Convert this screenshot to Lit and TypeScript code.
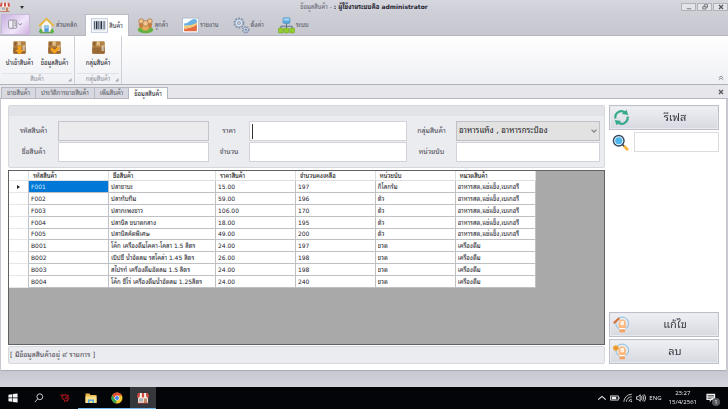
import { LitElement, html, css, svg, nothing } from "lit";
import { customElement, state } from "lit/decorators.js";
import { classMap } from "lit/directives/class-map.js";

const shop = svg`
  <path fill="#f3e6dc" d="M2 9h20v13H2z"/><path fill="#c08a6a" d="M14 13h6v9h-6z"/><path fill="#8fc3e2" stroke="#c08a6a" d="M4.500 13.500h7v5h-7z"/>
  <g fill="#fbf4ef"><path d="M5 2h5v7a2.500 2.500 0 0 1-5 0zM14 2h5v7a2.500 2.500 0 0 1-5 0z"/></g>
  <g fill="#d24a3e"><path d="M2 2h4L5 9a2.300 2.300 0 0 1-5 0zM9.700 2h4.600v7a2.300 2.300 0 0 1-4.600 0zM18 2h4l2 7a2.300 2.300 0 0 1-5 0z"/></g>
  <path fill="#b9463a" d="M1 21.500h22V23H1z"/>`;
const boxBase = svg`
  <rect x="2" y="2" width="20" height="20" rx="2" fill="#b38143"/><path fill="#9a6a36" d="M2 12h20v8a2 2 0 0 1-2 2H4a2 2 0 0 1-2-2z"/>
  <path fill="#e3c38d" d="M9 2h5v8l-2.500-2L9 10z"/><path fill="#f4ead5" d="M17 9h4v8h-4z"/><path stroke="#8c6a44" d="M18 10v6M20 10v6" stroke-width=".8"/>
  <path stroke="#6e4a28" fill="none" d="M4 5h4M4 8h3M5 3v6"/>`;

const icons = {
  shop,
  house: svg`<path fill="#58a846" d="M1 20q11-5 22 0l-2 3H3z"/><path fill="#f7f4ea" stroke="#a59c87" stroke-width=".7" d="M4.500 11 12 4l7.500 7v10h-15z"/>
    <path fill="none" stroke="#e8b72f" stroke-width="2.400" stroke-linejoin="round" d="M1.500 13 12 2.500 22.500 13"/><path fill="#4e9bd8" d="M9 12h6v9H9z"/><path fill="#a6d4f4" d="M10 13h4v3h-4z"/><path fill="#58b43c" d="M2 17q3-2 5 3l-4 2zM17 20q2-5 5-3l-1 5z"/>`,
  barcode: svg`<rect x=".5" y="2.500" width="23" height="19" fill="#fff" stroke="#9fb4cd"/><rect x="3" y="5" width="18" height="14" fill="#cad3de"/>
    <path stroke="#26303d" d="M5 6v11M11 6v11M18.500 6v11"/><path stroke="#26303d" stroke-width="2" d="M8 6v11M14.500 6v11"/>`,
  people: svg`<ellipse cx="12" cy="18" rx="11" ry="5" fill="#62b13e"/><path fill="#8ccf5e" d="M4 16q8-4 16 0-8 4-16 0"/>
    <path fill="#c77f3d" d="M2.500 10q3-3 6 0v6H4zM15.500 10q3-3 6 0L20 16h-4.500z"/>
    <g fill="#f2c490" stroke="#9b6334" stroke-width=".9"><circle cx="6" cy="6" r="3.500"/><circle cx="18" cy="6" r="3.500"/></g>
    <path fill="#e7a85b" d="M7.500 14q4.500-4 9 0l-1 5h-7z"/><circle cx="12" cy="9" r="4" fill="#f2c490" stroke="#9b6334" stroke-width=".9"/>`,
  chart: svg`<rect x=".5" y="1.500" width="23" height="21" fill="#fff" stroke="#a3b2cb"/><path fill="#e46b44" d="M3 19v-3q9 1 18-6v10H3z"/><path fill="#f5cb72" d="M3 16v-4q9 1 18-5v4q-9 6-18 5"/><path fill="#6cb1e3" d="M3 12V9q5 0 9-4t9-1v4q-9 5-18 4"/>`,
  gears: svg`<g fill="#dde5f0" stroke="#8392aa"><circle cx="8.500" cy="8.500" r="6.500" stroke-width="2.500" stroke-dasharray="2.600 1.500"/><circle cx="8.500" cy="8.500" r="5.500"/><circle cx="8.500" cy="8.500" r="2.200" fill="#c8c8d0"/>
    <circle cx="18" cy="18" r="4" stroke-width="2.500" stroke-dasharray="2 1.300"/><circle cx="18" cy="18" r="3.500"/><circle cx="18" cy="18" r="1.300" fill="#5e85b8"/></g>`,
  network: svg`<rect x="7" y="1" width="10" height="8" rx="1.500" fill="#58a9e0" stroke="#3c7bb0" stroke-width=".6"/><path fill="#aad6f5" d="M8 2h8v3H8z"/>
    <path fill="none" stroke="#5c7391" stroke-width="1.400" d="M12 9v7M4 16v-3h16v3"/>
    <g fill="#93cc2f" stroke="#5f941f" stroke-width=".6"><rect x=".5" y="15.500" width="7" height="7" rx="1.500"/><rect x="8.500" y="15.500" width="7" height="7" rx="1.500"/><rect x="16.500" y="15.500" width="7" height="7" rx="1.500"/></g>`,
  boxDown: svg`${boxBase}<path fill="#f8a51c" d="M9 10h6v6h3.500L12 23l-6.500-7H9z"/>`,
  boxCheck: svg`${boxBase}<path fill="#f8a51c" d="m5 15 3-3 4 4 6-6 3 3-9 9z"/>`,
  box: boxBase,
  launcher: svg`<rect x="1" y="5" width="13" height="13" rx="1.500" fill="#f4f1f8" stroke="#8c8694" stroke-width="1.400"/><path stroke="#8c8694" stroke-width="1.500" d="M8 5v13M10 8h3M10 11h3M10 14h3"/><path fill="none" stroke="#8c8694" stroke-width="1.600" d="m17 10 2.500 3 2.500-3"/>`,
  corner: svg`<path fill="#a3a4ae" d="M22 8v14H8z"/>`,
  refresh: svg`<g fill="none" stroke="#35a98c" stroke-width="3"><path d="M3.500 13.500A8.500 8.500 0 0 1 17 5"/><path d="M20.500 10.500A8.500 8.500 0 0 1 7 19"/></g><path fill="#35a98c" d="m12.500 7 9 1.500L19 1zM11.500 17l-9-1.500L5 23z"/>`,
  search: svg`<path stroke="#f6b53c" stroke-width="4" stroke-linecap="round" d="m17.500 17.500 4 4"/><path stroke="#2c3e50" stroke-width="2" d="m14 14 3 3"/><circle cx="9.500" cy="9.500" r="7.500" fill="#e8f5fc" stroke="#34495e" stroke-width="2"/><circle cx="9.500" cy="9.500" r="5" fill="#4db6ec"/>`,
  editHand: svg`<circle cx="13" cy="10.500" r="9" fill="none" stroke="#83bce2" stroke-width="1.400"/><path fill="#fbb77c" d="M8 11q0-6 5-6t5 6v7H8z"/><path fill="#fff0df" d="M10.500 7h5v6h-5z"/><path fill="#fff" d="M8.500 17h9v2h-9z"/><path fill="#f7a35f" d="M9 19h8v4H9z"/><path stroke="#d2763e" stroke-width="3" d="m1 10 8-7"/>`,
  deleteHand: svg`<circle cx="13" cy="10.500" r="9" fill="none" stroke="#83bce2" stroke-width="1.400"/><path fill="#fbb77c" d="M8 11q0-6 5-6t5 6v7H8z"/><path fill="#fff0df" d="M10.500 7h5v6h-5z"/><path fill="#fff" d="M8.500 17h9v2h-9z"/><path fill="#f7a35f" d="M9 19h8v4H9z"/><circle cx="4" cy="7" r="4" fill="#f0a63a"/><path stroke="#b96b16" d="M2 7h4"/>`,
  minimize: svg`<path stroke="#55555f" stroke-width="3" d="M3 19h18"/>`,
  restore: svg`<g fill="#eee" stroke="#55555f" stroke-width="3"><path d="M9 3h13v10H9z"/><path d="M3 11h13v9H3z"/></g>`,
  close: svg`<path stroke="#55555f" stroke-width="5" d="m4 4 16 16M20 4 4 20"/>`,
  collapse: svg`<path fill="none" stroke="#77777f" stroke-width="3" d="m3 12 9-8 9 8M3 20l9-8 9 8"/>`,
  windows: svg`<path fill="#f4f4f4" d="m1 4 9-1.200V11H1zM11.500 2.500 23 1v10H11.500zM1 12.500h9v8.300L1 19.500zM11.500 12.500H23V23l-11.500-1.600z"/>`,
  taskSearch: svg`<circle cx="14" cy="9" r="7" fill="none" stroke="#e8e8e8" stroke-width="2"/><path stroke="#e8e8e8" stroke-width="2" d="m9 14-7 8"/>`,
  garena: svg`<path fill="none" stroke="#b3161c" stroke-width="2.600" d="M1 6q10-4 20 1M8 6q-6 5-1 8t4 7M13 10q7-3 7 3t-7 7M12 13h5"/>`,
  folder: svg`<path fill="#e9b94c" d="M1 3h8l2 3h12v16H1z"/><path fill="#fbe08c" d="M1 9h22v13H1z"/><path fill="#56a8da" d="M6 15h12v7h-3v-4H9v4H6z"/>`,
  chrome: svg`<circle cx="12" cy="12" r="11" fill="#f4c430"/><path fill="#dd4a3a" d="M2.500 6.500A11 11 0 0 1 22 7H12l-5 5z"/><path fill="#31a350" d="M2.500 6.500 8 15l4 2-3 5.700A11 11 0 0 1 2.500 6.500"/><circle cx="12" cy="12" r="5" fill="#fff"/><circle cx="12" cy="12" r="4" fill="#4285f4"/>`,
  up: svg`<path fill="none" stroke="#eee" stroke-width="2.500" d="m3 16 9-8 9 8"/>`,
  battery: svg`<path fill="none" stroke="#eee" stroke-width="2" d="M1 7h19v10H1z"/><path fill="#eee" d="M4 9h11v6H4zM21 10h2v4h-2z"/>`,
  wifi: svg`<g fill="none" stroke="#ddd" stroke-width="2"><path d="M2 21A19 19 0 0 1 21 3M8 21A13 13 0 0 1 21 9M14 21a7 7 0 0 1 7-6"/></g><circle cx="20" cy="20" r="2" fill="#ddd"/>`,
  sound: svg`<path fill="none" stroke="#eee" stroke-width="2" d="M1 9h4l5-5v16l-5-5H1zM13 8q3 4 0 8M16 5q6 7 0 14M19 3q8 9 0 18"/>`,
  note: svg`<path fill="#f2f2f2" d="M1 2h21v15h-9l-4 5v-5H1z"/><path stroke="#222" stroke-width="1.500" d="M4 6h15M4 9.500h15M4 13h9"/>`,
};
type IconName = keyof typeof icons;

const icon = (name: IconName, size = "") =>
  html`<svg class="icon ${size}" viewBox="0 0 24 24" aria-hidden="true">${icons[name]}</svg>`;

interface Product { code: string; name: string; price: string; left: string; unit: string; group: string }

const FRESH = "อาหารสด,แช่แข็ง,เบเกอรี";
const DRINK = "เครื่องดื่ม";
const PRODUCTS: Product[] = [
  { code: "F001", name: "ปลาซาบะ", price: "15.00", left: "197", unit: "กิโลกรัม", group: FRESH },
  { code: "F002", name: "ปลาทับทิม", price: "59.00", left: "196", unit: "ตัว", group: FRESH },
  { code: "F003", name: "ปลากะพงขาว", price: "106.00", left: "170", unit: "ตัว", group: FRESH },
  { code: "F004", name: "ปลานิล ขนาดกลาง", price: "18.00", left: "195", unit: "ตัว", group: FRESH },
  { code: "F005", name: "ปลานิลคัดพิเศษ", price: "49.00", left: "200", unit: "ตัว", group: FRESH },
  { code: "B001", name: "โค้ก เครื่องดื่มโคคา-โคลา 1.5 ลิตร", price: "24.00", left: "197", unit: "ขวด", group: DRINK },
  { code: "B002", name: "เป๊ปซี่ น้ำอัดลม รสโคล่า 1.45 ลิตร", price: "26.00", left: "198", unit: "ขวด", group: DRINK },
  { code: "B003", name: "สไปรท์ เครื่องดื่มอัดลม 1.5 ลิตร", price: "24.00", left: "198", unit: "ขวด", group: DRINK },
  { code: "B004", name: "โค้ก ซีโร่ เครื่องดื่มน้ำอัดลม 1.25ลิตร", price: "24.00", left: "240", unit: "ขวด", group: DRINK },
];

const MENU: { icon: IconName; label: string }[] = [
  { icon: "house", label: "ส่วนหลัก" },
  { icon: "barcode", label: "สินค้า" },
  { icon: "people", label: "ลูกค้า" },
  { icon: "chart", label: "รายงาน" },
  { icon: "gears", label: "ตั้งค่า" },
  { icon: "network", label: "ระบบ" },
];

@customElement("app-root")
export class AppRoot extends LitElement {
  @state() private menu = "สินค้า";
  @state() private page = "ข้อมูลสินค้า";
  @state() private selected = "F001";

  static styles = css`
    :host {
      display: flex; flex-direction: column; min-height: 100vh;
      font: 6px/10px "DejaVu Sans", "Noto Sans Thai Looped", "Loma", "Noto Sans Thai", sans-serif;
      color: #24242c; background: #c8c8d0;
    }
    * { box-sizing: border-box; }
    button, input, select { font: inherit; color: inherit; margin: 0; padding: 0; border: 0; background: none; border-radius: 0; }
    .icon { width: 15px; height: 15px; flex: none; display: block; }
    .icon.xs { width: 6px; height: 6px; }
    .icon.s { width: 10px; height: 10px; }
    .icon.m { width: 12px; height: 12px; }
    .icon.l { width: 17px; height: 17px; }

    .titlebar { display: grid; grid-template-columns: 1fr auto 1fr; align-items: center; height: 14px; background: linear-gradient(#d6d7de, #cdced6); }
    .quick { display: flex; align-items: center; gap: 10px; }
    .caret { border: 2px solid transparent; border-top: 3px solid #333; border-bottom: 0; }
    .title { color: #666672; }
    .title b { color: #23232f; }
    .winbtns { display: flex; justify-content: flex-end; gap: 1px; }
    .winbtns button { width: 15px; height: 8px; border: 1px solid #b1b1ba; background: #e3e3e9; display: grid; place-items: center; }

    .menu { display: flex; height: 22px; background: linear-gradient(#cdced6, #c6c7cf); border-bottom: 1px solid #b4b5bf; }
    .launcher { width: 29px; margin: 0 2px 0 1px; display: grid; place-items: center; background: linear-gradient(135deg, #c9afe0, #f0e6fa 60%, #cfaee0); border: 1px solid #c9b9d8; }
    .tab { display: flex; align-items: center; gap: 1px; padding: 0 5px; margin-right: 2px; color: #55555f; border: 1px solid transparent; border-bottom: 0; white-space: nowrap; }
    .tab.on { background: #fff; border-color: #b9bac4; color: #33333c; margin-bottom: -1px; }

    .ribbon { display: flex; height: 49px; background: linear-gradient(#fff, #eff0f4); border-bottom: 1px solid #b0b1bb; }
    .group { display: flex; flex-direction: column; justify-content: space-between; border-right: 1px solid #cfd0d8; padding: 4px 2px 0; }
    .tools { display: flex; }
    .tool { display: flex; flex-direction: column; align-items: center; gap: 3px; width: 35px; white-space: nowrap; }
    .group.single .tool { width: 42px; }
    .caption { display: grid; grid-template-columns: 6px 1fr 6px; align-items: center; text-align: center; color: #92939d; border-top: 1px solid #e2e3e9; }
    .caption span { grid-column: 2; }
    .collapse { margin: auto 4px 3px auto; }

    .docs { display: flex; align-items: flex-end; height: 14px; padding: 0 4px 0 2px; background: #e6e6eb; border-bottom: 1px solid #b6b7c1; }
    .doc { height: 11px; padding: 0 5px; color: #5b5b66; border: 1px solid #b6b7c1; border-bottom: 0; margin-left: -1px; background: #d8d9e0; white-space: nowrap; }
    .doc.on { height: 12px; background: #fff; color: #22222b; margin-bottom: -1px; }
    .docs .end { margin: auto 0 auto auto; }

    main { flex: 1; display: flex; gap: 4px; margin: 0 2px 0 1px; padding: 6px 7px; background: #fff; border-bottom: 1px solid #a9aab5; }
    .left { flex: 1; min-width: 0; display: flex; flex-direction: column; gap: 1px; }
    .panel { background: #ebecf0; border: 1px solid #d6d7dd; border-radius: 2px; }
    .strip { height: 10px; background: #e2e3e8; }
    .form { display: grid; grid-template-columns: 49px 151fr 40px 158fr 49px 144fr; grid-auto-rows: 20px; row-gap: 1px; align-items: stretch; padding: 5px 4px 5px 0; font-size: 7px; color: #4b4b55; }
    .form label { display: grid; place-items: center; white-space: nowrap; }
    .form input, .side input { width: 100%; min-width: 0; padding: 0 3px; background: #fff; border: 1px solid #d2d3da; outline: none; }
    .form input:disabled { background: #ebebee; border-color: #c3c4cc; }
    .form input:focus:placeholder-shown { caret-color: transparent; background: linear-gradient(#333, #333) 2px center / 1px 15px no-repeat #fff; }
    .combo { width: 100%; min-width: 0; font-size: 8px; padding: 0 2px; border: 1px solid #c0c1c5; background: #e2e2e2; appearance: none; color: #1c1c22; grid-area: 1 / 1; }
    .combobox { display: grid; align-items: stretch; }
    .chev { grid-area: 1 / 1; justify-self: end; align-self: center; width: 4px; height: 4px; margin: 0 4px 2px 0; border: solid #777; border-width: 0 1px 1px 0; rotate: 45deg; }

    .grid { flex: 1; margin-top: 1px; background: #a9a9a9; border: 1px solid #606066; }
    table { width: 88.5%; height: 117px; table-layout: fixed; border-spacing: 0; background: #fff; color: #22222a; }
    th, td { padding: 0 2px; line-height: 9px; border: solid #bfc0c3; border-width: 0 1px 1px 0; text-align: left; font-weight: normal; white-space: nowrap; overflow: hidden; }
    th { padding-left: 4px; border-color: #dedede; color: #000; }
    .mark { width: 20px; text-align: center; border-bottom-color: #e6e6e6; }
    .arrow { display: inline-block; border: 2px solid transparent; border-left: 3px solid #222; border-right: 0; }
    .code { width: 80px; }
    .name { width: 107px; }
    td.sel { background: #0078d7; color: #cfe6fa; }
    .status { padding: 3px 1px; font-size: 7px; color: #4b4b55; }

    .side { flex: 0 0 110px; display: flex; flex-direction: column; gap: 2px; }
    .big { display: grid; grid-template-columns: 22px 1fr; place-items: center; height: 25px; font-size: 11px; color: #3d3d48; border: 1px solid #bebfca; box-shadow: inset 0 0 0 1px #e9eaf0; background: linear-gradient(#eff0f4, #d7d9e1); }
    .find { display: flex; align-items: center; gap: 5px; margin-bottom: auto; padding-left: 3px; }
    .find input { height: 20px; border-color: #dcdce0; }

    .foot { height: 16px; background: linear-gradient(#c6c7d0, #d5d6dd); }
    .taskbar { display: flex; align-items: stretch; height: 22px; background: #030509; color: #f0f0f0; font-family: "Open Sans", sans-serif; }
    .task { width: 26px; display: grid; place-items: center; border-bottom: 1px solid transparent; }
    .task.open { border-bottom-color: #76b9ed; }
    .task.on { background: #34373b; }
    .tray { margin-left: auto; display: flex; align-items: center; gap: 3px; padding-right: 12px; }
    .clock { text-align: center; line-height: 9px; margin: 0 6px 0 4px; }
    .notes { position: relative; }
    .badge { position: absolute; right: -4px; bottom: -3px; width: 8px; height: 8px; border-radius: 50%; background: #55585c; text-align: center; line-height: 8px; }
  `;

  private tool(name: IconName, label: string) {
    return html`<button class="tool">${icon(name)}<span>${label}</span></button>`;
  }

  private caption(label: string) {
    return html`<div class="caption"><span>${label}</span>${icon("corner", "xs")}</div>`;
  }

  private task(name: IconName, label: string, open = false, on = false) {
    return html`<button class=${classMap({ task: true, open, on })} aria-label=${label}>
      ${icon(name, name === "taskSearch" || name === "windows" || name === "garena" ? "s" : "m")}
    </button>`;
  }

  private row(p: Product) {
    const sel = p.code === this.selected;
    return html`<tr @click=${() => (this.selected = p.code)}>
      <td class="mark">${sel ? html`<span class="arrow"></span>` : nothing}</td>
      <td class=${classMap({ sel })}>${p.code}</td>
      <td>${p.name}</td><td>${p.price}</td><td>${p.left}</td><td>${p.unit}</td><td>${p.group}</td>
    </tr>`;
  }

  render() {
    return html`
      <header class="titlebar">
        <div class="quick">${icon("shop", "s")}<span class="caret"></span></div>
        <div class="title">ข้อมูลสินค้า - <b>: ผู้ใช้งานระบบคือ administrator</b></div>
        <div class="winbtns">
          <button aria-label="ย่อ">${icon("minimize", "xs")}</button>
          <button aria-label="คืนขนาด">${icon("restore", "xs")}</button>
          <button aria-label="ปิด">${icon("close", "xs")}</button>
        </div>
      </header>
      <nav class="menu">
        <button class="launcher" aria-label="เมนู">${icon("launcher")}</button>
        ${MENU.map((m) => html`<button class=${classMap({ tab: true, on: m.label === this.menu })}
          @click=${() => (this.menu = m.label)}>${icon(m.icon, "l")}<span>${m.label}</span></button>`)}
      </nav>
      <section class="ribbon">
        <div class="group">
          <div class="tools">${this.tool("boxDown", "นำเข้าสินค้า")}${this.tool("boxCheck", "ข้อมูลสินค้า")}</div>
          ${this.caption("สินค้า")}
        </div>
        <div class="group single">
          <div class="tools">${this.tool("box", "กลุ่มสินค้า")}</div>
          ${this.caption("กลุ่มสินค้า")}
        </div>
        <button class="collapse" aria-label="ยุบแถบ">${icon("collapse", "xs")}</button>
      </section>
      <nav class="docs">
        ${["ขายสินค้า", "ประวัติการขายสินค้า", "เพิ่มสินค้า", "ข้อมูลสินค้า"].map((d) => html`<button
          class=${classMap({ doc: true, on: d === this.page })} @click=${() => (this.page = d)}>${d}</button>`)}
        <button class="end" aria-label="ปิดแท็บ">${icon("close", "xs")}</button>
      </nav>
      <main>
        <div class="left">
          <section class="panel">
            <div class="strip"></div>
            <form class="form">
              <label for="code">รหัสสินค้า</label><input id="code" disabled />
              <label for="price">ราคา</label><input id="price" placeholder=" " />
              <label for="group">กลุ่มสินค้า</label>
              <div class="combobox">
                <select class="combo" id="group"><option>อาหารแห้ง , อาหารกระป๋อง</option><option>${FRESH}</option><option>${DRINK}</option></select>
                <span class="chev"></span>
              </div>
              <label for="name">ชื่อสินค้า</label><input id="name" />
              <label for="amount">จำนวน</label><input id="amount" />
              <label for="unit">หน่วยนับ</label><input id="unit" />
            </form>
          </section>
          <div class="grid">
            <table>
              <thead><tr>
                <th class="mark"></th><th class="code">รหัสสินค้า</th><th class="name">ชื่อสินค้า</th>
                <th>ราคาสินค้า</th><th>จำนวนคงเหลือ</th><th>หน่วยนับ</th><th>หมวดสินค้า</th>
              </tr></thead>
              <tbody>${PRODUCTS.map((p) => this.row(p))}</tbody>
            </table>
          </div>
          <div class="panel status">[ มีข้อมูลสินค้าอยู่ ๙ รายการ ]</div>
        </div>
        <aside class="side">
          <button class="big">${icon("refresh", "l")}<span>รีเฟส</span></button>
          <div class="find">${icon("search", "l")}<input aria-label="ค้นหา" /></div>
          <button class="big">${icon("editHand", "l")}<span>แก้ไข</span></button>
          <button class="big">${icon("deleteHand", "l")}<span>ลบ</span></button>
        </aside>
      </main>
      <div class="foot"></div>
      <footer class="taskbar">
        ${this.task("windows", "เริ่ม")}${this.task("taskSearch", "ค้นหา")}${this.task("garena", "เกม")}
        ${this.task("folder", "แฟ้ม", true)}${this.task("chrome", "เบราว์เซอร์", true)}${this.task("shop", "ร้านค้า", true, true)}
        <div class="tray">
          ${icon("up", "s")}${icon("battery", "s")}${icon("wifi", "s")}${icon("sound", "s")}
          <span>ENG</span><div class="clock">23:27<br />15/4/2561</div>
          <div class="notes">${icon("note", "s")}<span class="badge">1</span></div>
        </div>
      </footer>
    `;
  }

  firstUpdated() {
    this.renderRoot.querySelector<HTMLInputElement>("#price")?.focus();
  }
}
